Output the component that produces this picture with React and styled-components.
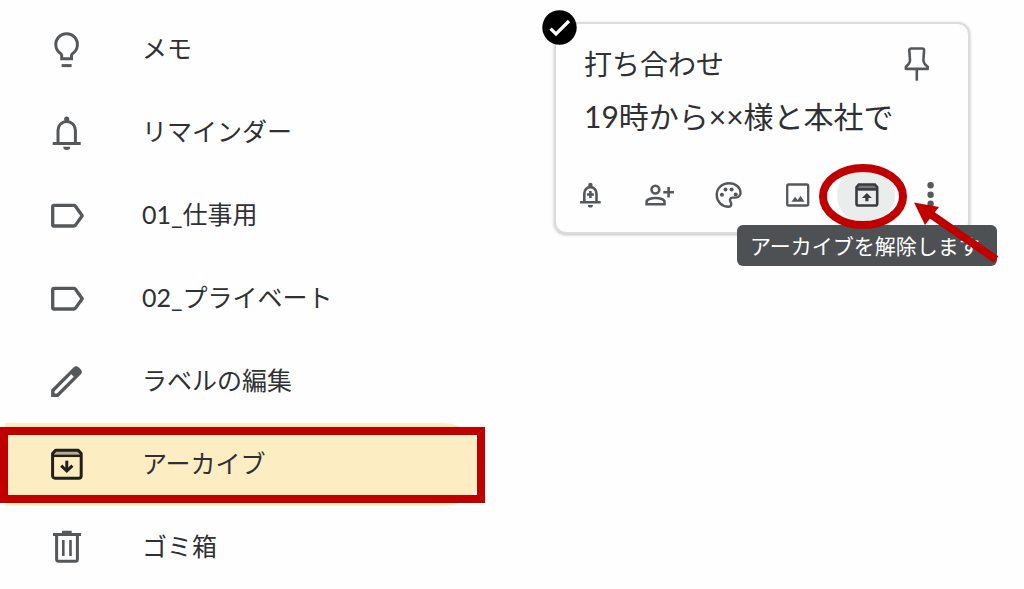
import React from 'react'
import styled, { createGlobalStyle, css } from 'styled-components'

const colors = {
  text: '#2f3033',
  icon: '#55585b',
  active: '#fdedc3',
  mark: '#c00000',
  tooltip: '#4d5154',
  border: '#dcdcdc',
}

const GlobalStyle = createGlobalStyle`
  *, *::before, *::after {
    box-sizing: border-box;
  }
  body {
    margin: 0;
    background: #fefefe;
    color: ${colors.text};
    font-family: Lato, 'Noto Sans CJK JP', sans-serif;
  }
  button {
    border: 0;
    padding: 0;
    background: none;
    color: inherit;
    font: inherit;
    cursor: pointer;
  }
`

const Page = styled.div`
  display: grid;
  grid-template-columns: minmax(300px, 485px) 1fr;
`

const Sidebar = styled.nav`
  padding-top: 8px;
`

const NavList = styled.ul`
  margin: 0;
  padding: 0 0 0 5px;
  list-style: none;
`

const NavLink = styled.a`
  position: relative;
  display: flex;
  align-items: center;
  gap: 55px;
  height: 83px;
  padding-left: 41px;
  border-radius: 0 42px 42px 0;
  color: ${colors.text};
  text-decoration: none;
  svg {
    flex: none;
    width: 41px;
    height: 41px;
    color: ${colors.icon};
  }
  ${props =>
    props.$active &&
    css`
      background: ${colors.active};
      svg {
        color: #221f18;
      }
      &::after {
        content: '';
        position: absolute;
        inset: 4px 0 3px -5px;
        border: 8px solid ${colors.mark};
      }
    `}
`

const NavLabel = styled.span`
  padding-bottom: 4px;
  font-size: 25px;
  line-height: 36px;
  white-space: nowrap;
`

const Main = styled.main`
  padding: 22px 54px 22px 69px;
`

const Card = styled.article`
  position: relative;
  padding: 22px 0 8px;
  border: 2px solid ${colors.border};
  border-radius: 12px;
  background: #fefefe;
  box-shadow: 0 1px 3px rgba(0, 0, 0, 0.25);
`

const CheckButton = styled.button`
  position: absolute;
  top: -14px;
  left: -14px;
  width: 35px;
  height: 35px;
  svg {
    display: block;
  }
`

const CardHeader = styled.header`
  display: flex;
  align-items: center;
  justify-content: space-between;
  padding: 0 33px 0 28px;
`

const Title = styled.h2`
  margin: 0;
  font-size: 28px;
  font-weight: 400;
  line-height: 36px;
`

const PinButton = styled.button`
  height: 36px;
  color: ${colors.icon};
  svg {
    display: block;
  }
`

const Body = styled.p`
  margin: 12px 0 28px;
  padding: 0 28px;
  font-size: 30px;
  line-height: 44px;
  white-space: nowrap;
`

const Toolbar = styled.div`
  display: flex;
  gap: 11px;
  padding: 0 5px;
`

const ToolButton = styled.button`
  position: relative;
  z-index: ${props => (props.$hovered ? 1 : 0)};
  display: grid;
  place-items: center;
  flex: none;
  width: ${props => (props.$narrow ? 48 : 58)}px;
  height: 58px;
  border-radius: 50%;
  background: ${props => (props.$hovered ? '#ebecec' : 'none')};
  color: ${props => (props.$hovered ? '#3a3c3f' : colors.icon)};
`

const Tooltip = styled.span`
  position: absolute;
  top: 59px;
  left: -100px;
  padding: 0 17px 0 13px;
  border-radius: 6px;
  background: ${colors.tooltip};
  color: #fff;
  font-size: 21px;
  line-height: 41px;
  white-space: nowrap;
`

const Marker = styled.svg`
  position: absolute;
  top: -8px;
  left: -20px;
  pointer-events: none;
`

function BulbIcon() {
  return (
    <svg viewBox="0 0 41 41" fill="none" stroke="currentColor" strokeWidth="3">
      <path d="M15.7 29.8v-3.2c0-1-.5-1.7-1.2-2.2a10.8 10.8 0 1 1 12.2 0c-.7.5-1.2 1.2-1.2 2.2v3.2z" />
      <path d="M15.6 36.6h10" />
    </svg>
  )
}

function BellIcon() {
  return (
    <svg viewBox="0 0 41 41" fill="none" stroke="currentColor" strokeWidth="3">
      <path d="M6.7 31.4h28M12 31V18.2a8.7 8.7 0 0 1 17.4 0V31" />
      <circle cx="20.7" cy="7" r="2.6" fill="currentColor" stroke="none" />
      <path d="M17.2 34.8h7a3.5 3.3 0 0 1-7 0z" fill="currentColor" stroke="none" />
    </svg>
  )
}

function LabelIcon() {
  return (
    <svg viewBox="0 0 41 41" fill="none" stroke="currentColor" strokeWidth="3.3" strokeLinejoin="round">
      <path d="M8 10.4h19.6c.8 0 1.4.3 1.9.9l6.7 9.4-6.7 9.4c-.5.6-1.1.9-1.9.9H8c-.8 0-1.3-.5-1.3-1.3V11.7c0-.8.5-1.3 1.3-1.3z" />
    </svg>
  )
}

function PencilIcon() {
  return (
    <svg viewBox="0 0 24 24" fill="currentColor">
      <path d="M20.41 4.94l-1.35-1.35c-.78-.78-2.05-.78-2.83 0L3 16.82V21h4.18L20.41 7.77c.79-.78.79-2.05 0-2.83zm-14 14.12L5 19v-1.36l9.82-9.82 1.41 1.41-9.82 9.83z" />
    </svg>
  )
}

function ArchiveIcon() {
  return (
    <svg viewBox="0 0 41 41" fill="none" stroke="currentColor" strokeWidth="3" strokeLinejoin="round">
      <path d="M9.5 6.2h22.7l3 4.3H6.6z" fill="#b5ad95" stroke="none" />
      <path d="M9.6 6.2h22.6l3 3.4v22.2c0 1.5-.9 2.4-2.4 2.4H9c-1.5 0-2.4-.9-2.4-2.4V9.6z" />
      <path d="M6.6 11.8h28.6" strokeWidth="2.5" />
      <path d="M20.8 16.7v9.5" />
      <path d="M15.2 21.7l5.6 5.3 5.6-5.3" strokeLinejoin="miter" />
    </svg>
  )
}

function TrashIcon() {
  return (
    <svg viewBox="0 0 41 41" fill="none" stroke="currentColor" strokeWidth="3">
      <path d="M7 7.5h28M16 5.2h9.7" />
      <path d="M10.6 8v24.2c0 1.3.7 2 2 2h16.8c1.300 0 2-.7 2-2V8" />
      <path d="M17.3 13v16M24.5 13v16" strokeWidth="2.6" />
    </svg>
  )
}

function CheckIcon() {
  return (
    <svg width="35" height="35" viewBox="0 0 35 35">
      <circle cx="17.5" cy="17.5" r="17.2" fill="#000" />
      <path d="M8.5 18.6l5.5 5.4 13-13" fill="none" stroke="#fff" strokeWidth="3.2" />
    </svg>
  )
}

function PinIcon() {
  return (
    <svg width="36" height="36" viewBox="0 0 36 36" fill="none" stroke="currentColor" strokeWidth="2.6">
      <path
        d="M12.2 2.5h11c1.3 0 1.900.6 1.900 1.700l-.7 10c0 2.700 1.600 4.400 4.300 6.600v2.100H6.900v-2.100c2.600-2.200 4.100-3.900 4.100-6.600l-.7-10c0-1.100.6-1.700 1.900-1.700z"
        strokeLinejoin="round"
      />
      <path d="M17.800 23v11.700" />
    </svg>
  )
}

const ToolIcon = styled.svg.attrs({ viewBox: '0 0 32 32', fill: 'none', stroke: 'currentColor' })`
  width: 32px;
  height: 32px;
  stroke-width: 2.6;
`

function BellAddIcon() {
  return (
    <ToolIcon>
      <path d="M6 23.2h20.7M10.3 23v-8.5a6.1 6.4 0 0 1 12.2 0V23" />
      <path d="M16.4 12v7M12.9 15.5h7" />
      <circle cx="16.4" cy="6" r="2.2" fill="currentColor" stroke="none" />
      <path d="M13.8 26h5.2a2.6 2.6 0 0 1-5.2 0z" fill="currentColor" stroke="none" />
    </ToolIcon>
  )
}

function PersonAddIcon() {
  return (
    <ToolIcon>
      <circle cx="12.4" cy="10.6" r="3.9" />
      <path d="M3.6 25.3v-2.4c0-2.5 4.6-3.9 8.9-3.9s9 1.4 9 3.9v2.4z" />
      <path d="M25.6 8v10.6M20.3 13.3h10.6" />
    </ToolIcon>
  )
}

function PaletteIcon() {
  return (
    <ToolIcon>
      <path
        d="M17 4.3C10 4.3 4.7 9.5 4.7 16S10 27.8 16.4 27.8c1.7 0 2.8-1.2 2.8-2.8 0-1.9-1.2-2.2-1.2-3.9 0-1.5 1.2-2.5 2.8-2.5h2.7c3 0 5-2 5-4.9 0-5.4-5-9.4-11.5-9.4z"
        strokeWidth="2.4"
      />
      <g fill="currentColor" stroke="none">
        <circle cx="9.9" cy="15.8" r="2" />
        <circle cx="13.5" cy="10.6" r="2" />
        <circle cx="19.6" cy="10.6" r="2" />
        <circle cx="23.7" cy="15.4" r="2" />
      </g>
    </ToolIcon>
  )
}

function ImageIcon() {
  return (
    <ToolIcon>
      <rect x="6.2" y="5.5" width="21" height="21" rx="1.5" strokeWidth="2.3" />
      <path d="M10.5 22.8l3.5-5 2.7 3.2 2.8-4.3 4 6.1z" fill="currentColor" stroke="none" />
    </ToolIcon>
  )
}

function UnarchiveIcon() {
  return (
    <ToolIcon>
      <path d="M8.5 5.4h16.8l1.9 4.6H6.5z" fill="#77797b" stroke="none" />
      <path d="M8.8 5.5h16.1l2.3 2.8v16.4c0 1.2-.6 1.8-1.8 1.8H8.3c-1.2 0-1.8-.6-1.8-1.8V8.3z" />
      <path d="M6.5 10.4h20.7" />
      <path d="M16.9 14l5 5h-3.4v3.3h-3.2V19h-3.4z" fill="currentColor" stroke="none" />
    </ToolIcon>
  )
}

function MoreIcon() {
  return (
    <ToolIcon>
      <g fill="currentColor" stroke="none">
        <circle cx="16.6" cy="6.2" r="3.2" />
        <circle cx="16.6" cy="15.7" r="3.2" />
        <circle cx="16.6" cy="24.7" r="3.2" />
      </g>
    </ToolIcon>
  )
}

const navItems = [
  { label: 'メモ', Icon: BulbIcon },
  { label: 'リマインダー', Icon: BellIcon },
  { label: '01_仕事用', Icon: LabelIcon },
  { label: '02_プライベート', Icon: LabelIcon },
  { label: 'ラベルの編集', Icon: PencilIcon },
  { label: 'アーカイブ', Icon: ArchiveIcon, active: true },
  { label: 'ゴミ箱', Icon: TrashIcon },
]

function NoteCard() {
  return (
    <Card>
      <CheckButton aria-label="メモを選択">
        <CheckIcon />
      </CheckButton>
      <CardHeader>
        <Title>打ち合わせ</Title>
        <PinButton aria-label="メモを固定">
          <PinIcon />
        </PinButton>
      </CardHeader>
      <Body>19時から××様と本社で</Body>
      <Toolbar>
        <ToolButton aria-label="リマインダーを追加">
          <BellAddIcon />
        </ToolButton>
        <ToolButton aria-label="共同編集者">
          <PersonAddIcon />
        </ToolButton>
        <ToolButton aria-label="背景オプション">
          <PaletteIcon />
        </ToolButton>
        <ToolButton aria-label="画像を追加">
          <ImageIcon />
        </ToolButton>
        <ToolButton $hovered aria-describedby="unarchive-tip">
          <UnarchiveIcon />
          <Tooltip id="unarchive-tip" role="tooltip">
            アーカイブを解除します
          </Tooltip>
          {/* red ring and arrow pointing at the button */}
          <Marker width="200" height="120" viewBox="0 0 200 120" aria-hidden="true">
            <ellipse cx="46" cy="38.5" rx="40" ry="28.5" fill="none" stroke={colors.mark} strokeWidth="8" />
            <path d="M114 56.5l65 45" stroke={colors.mark} strokeWidth="8" />
            <path d="M97 44.500l25 4.500-14 18z" fill={colors.mark} />
          </Marker>
        </ToolButton>
        <ToolButton $narrow aria-label="その他のアクション">
          <MoreIcon />
        </ToolButton>
      </Toolbar>
    </Card>
  )
}

function App() {
  return (
    <>
      <GlobalStyle />
      <Page>
        <Sidebar>
          <NavList>
            {navItems.map(({ label, Icon, active }) => (
              <li key={label}>
                <NavLink href="#" $active={active} aria-current={active ? 'page' : undefined}>
                  <Icon />
                  <NavLabel>{label}</NavLabel>
                </NavLink>
              </li>
            ))}
          </NavList>
        </Sidebar>
        <Main>
          <NoteCard />
        </Main>
      </Page>
    </>
  )
}

export default App
